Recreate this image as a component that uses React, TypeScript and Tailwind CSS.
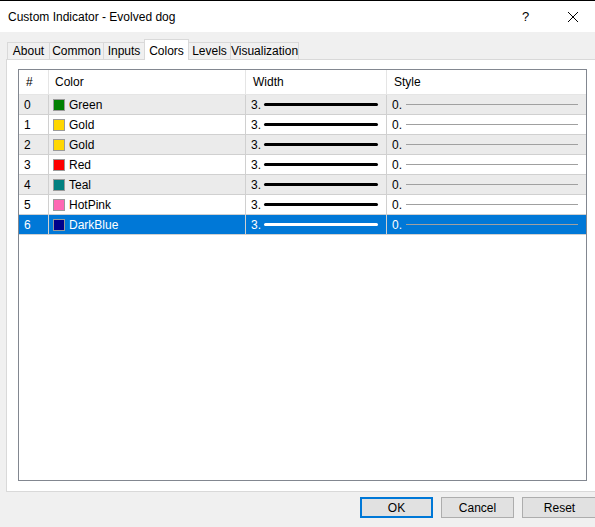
import React from "react";

const rows = [
  { n: "0", name: "Green", c: "#008000" },
  { n: "1", name: "Gold", c: "#ffd700" },
  { n: "2", name: "Gold", c: "#ffd700" },
  { n: "3", name: "Red", c: "#ff0000" },
  { n: "4", name: "Teal", c: "#008080" },
  { n: "5", name: "HotPink", c: "#ff69b4" },
  { n: "6", name: "DarkBlue", c: "#00008b" },
];

const tabs = [
  { t: "About", w: 42, cls: "h-[17px] bg-[#f0f0f0] border-t border-l border-[#d9d9d9] flex items-center justify-center" },
  { t: "Common", w: 54, cls: "h-[17px] bg-[#f0f0f0] border-t border-l border-[#d9d9d9] flex items-center justify-center" },
  { t: "Inputs", w: 41, cls: "h-[17px] bg-[#f0f0f0] border-t border-l border-[#d9d9d9] flex items-center justify-center" },
  { t: "Colors", w: 45, cls: "h-[21px] -mb-[1px] bg-white border-l border-r border-t border-[#d9d9d9] flex items-start justify-center pt-[2px]" },
  { t: "Levels", w: 41, cls: "h-[17px] bg-[#f0f0f0] border-t border-[#d9d9d9] flex items-center justify-center" },
  { t: "Visualization", w: 69, cls: "h-[17px] bg-[#f0f0f0] border-t border-l border-r border-[#d9d9d9] flex items-center justify-center" },
];

export default function App() {
  return (
    <div
      className="w-[595px] h-[527px] bg-[#f0f0f0] flex flex-col overflow-hidden text-[12px] text-black"
      style={{ fontFamily: '"Liberation Sans", Arial, sans-serif' }}
    >
      {/* Title bar */}
      <div className="h-[32px] shrink-0 bg-white border-t border-black flex items-center pl-[8px]">
        <span className="flex-1 text-[12px]">Custom Indicator - Evolved dog</span>
        <span className="w-[45px] text-center text-[13px] mr-[2px]">?</span>
        <span className="w-[45px] flex justify-center">
          <svg width="12" height="12" viewBox="0 0 12 12">
            <path d="M1 1L11 11M11 1L1 11" stroke="#000" strokeWidth="1" />
          </svg>
        </span>
      </div>

      {/* Tabs */}
      <div className="h-[27px] shrink-0 flex items-end pl-[7px] relative z-10">
        {tabs.map((tab) => (
          <div key={tab.t} style={{ width: tab.w }} className={tab.cls}>
            {tab.t}
          </div>
        ))}
      </div>

      {/* Panel */}
      <div className="ml-[6px] h-[433px] shrink-0 bg-white border border-[#d9d9d9] border-r-0 pl-[11px] pt-[9px] pr-[8px]">
        <div className="w-[569px] h-[412px] border border-[#828790] bg-white">
          {/* Header */}
          <div className="flex h-[25px] border-b border-[#e5e5e5]">
            <div className="w-[30px] border-r border-[#e5e5e5] flex items-center pl-[7px]">#</div>
            <div className="w-[197px] border-r border-[#e5e5e5] flex items-center pl-[6px]">Color</div>
            <div className="w-[141px] border-r border-[#e5e5e5] flex items-center pl-[7px]">Width</div>
            <div className="flex-1 flex items-center pl-[7px]">Style</div>
          </div>
          {rows.map((r, i) => {
            const sel = i === 6;
            const bg = sel ? "bg-[#0078d7] text-white" : i % 2 === 0 ? "bg-[#ebebeb]" : "bg-white";
            return (
              <div key={r.n} className={`flex h-[20px] border-b border-[#d0d0d0] ${bg}`}>
                <div className="w-[30px] border-r border-[#d0d0d0] flex items-center pl-[5px]">{r.n}</div>
                <div className="w-[197px] border-r border-[#d0d0d0] flex items-center pl-[4px]">
                  <span
                    className="w-[12px] h-[12px] border border-[#9a9a9a] mr-[4px]"
                    style={{ backgroundColor: r.c }}
                  />
                  {r.name}
                </div>
                <div className="w-[141px] border-r border-[#d0d0d0] flex items-center pl-[5px]">
                  <span>3.</span>
                  <span className={`ml-[3px] w-[114px] h-[3px] rounded-full ${sel ? "bg-white" : "bg-black"}`} />
                </div>
                <div className="flex-1 flex items-center pl-[5px]">
                  <span>0.</span>
                  <span className="ml-[4px] w-[172px] h-[1px] bg-[#a0a0a0]" />
                </div>
              </div>
            );
          })}
        </div>
      </div>

      {/* Buttons */}
      <div className="flex-1 flex justify-end items-start pt-[5px] gap-[8px] -mr-[2px]">
        <button className="w-[73px] h-[21px] bg-[#e1e1e1] border-2 border-[#0078d7]">OK</button>
        <button className="w-[73px] h-[21px] bg-[#e1e1e1] border border-[#adadad]">Cancel</button>
        <button className="w-[75px] h-[21px] bg-[#e1e1e1] border border-[#adadad]">Reset</button>
      </div>
    </div>
  );
}
